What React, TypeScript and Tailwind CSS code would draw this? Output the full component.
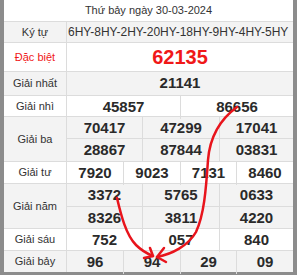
import React from "react";

const font = { fontFamily: '"Liberation Sans", Arial, sans-serif' };

function Label({ children, red }: { children: React.ReactNode; red?: boolean }) {
  return (
    <div
      className={`w-[63px] shrink-0 border-r border-[#dcdcdc] flex items-center justify-center text-[11px] ${
        red ? "text-[#f01818]" : "text-[#333]"
      }`}
    >
      {children}
    </div>
  );
}

function Num({ children, last }: { children: React.ReactNode; last?: boolean }) {
  return (
    <div
      className={`flex items-center justify-center font-bold text-[15px] text-[#2a2a2a] ${
        last ? "" : "border-r border-[#dcdcdc]"
      }`}
    >
      {children}
    </div>
  );
}

export default function App() {
  return (
    <div className="relative w-[300px] h-[275px] bg-white" style={font}>
      <div className="w-[297px] border-x-4 border-b-4 border-[#8c8c8c] bg-white">
        {/* Title */}
        <div className="h-[22px] border-b border-[#dcdcdc] flex items-center justify-center text-[11px] text-[#333]">
          Thứ bảy ngày 30-03-2024
        </div>
        {/* Ký tự */}
        <div className="h-[21px] border-b border-[#dcdcdc] flex bg-[#f3f3f3]">
          <Label>Ký tự</Label>
          <div className="flex-1 flex items-center overflow-hidden whitespace-nowrap pl-[1px] text-[12px] text-[#333]">
            6HY-8HY-2HY-20HY-18HY-9HY-4HY-5HY
          </div>
        </div>
        {/* Đặc biệt */}
        <div className="h-[29px] border-b border-[#dcdcdc] flex">
          <Label red>Đặc biệt</Label>
          <div className="flex-1 flex items-center justify-center font-bold text-[20px] text-[#f01818]">
            62135
          </div>
        </div>
        {/* Giải nhất */}
        <div className="h-[24px] border-b border-[#dcdcdc] flex bg-[#f3f3f3]">
          <Label>Giải nhất</Label>
          <div className="flex-1 flex items-center justify-center font-bold text-[15px] text-[#2a2a2a]">
            21141
          </div>
        </div>
        {/* Giải nhì */}
        <div className="h-[21px] border-b border-[#dcdcdc] flex">
          <Label>Giải nhì</Label>
          <div className="flex-1 grid grid-cols-[114px_1fr]">
            <Num>45857</Num>
            <Num last>86656</Num>
          </div>
        </div>
        {/* Giải ba */}
        <div className="border-b border-[#dcdcdc] flex bg-[#f3f3f3]">
          <Label>Giải ba</Label>
          <div className="flex-1 flex flex-col">
            <div className="h-[22px] border-b border-[#dcdcdc] grid grid-cols-[76px_77px_1fr]">
              <Num>70417</Num>
              <Num>47299</Num>
              <Num last>17041</Num>
            </div>
            <div className="h-[22px] grid grid-cols-[76px_77px_1fr]">
              <Num>28867</Num>
              <Num>87844</Num>
              <Num last>03831</Num>
            </div>
          </div>
        </div>
        {/* Giải tư */}
        <div className="h-[22px] border-b border-[#dcdcdc] flex">
          <Label>Giải tư</Label>
          <div className="flex-1 grid grid-cols-[57px_57px_56px_1fr]">
            <Num>7920</Num>
            <Num>9023</Num>
            <Num>7131</Num>
            <Num last>8460</Num>
          </div>
        </div>
        {/* Giải năm */}
        <div className="border-b border-[#dcdcdc] flex bg-[#f3f3f3]">
          <Label>Giải năm</Label>
          <div className="flex-1 flex flex-col">
            <div className="h-[23px] border-b border-[#dcdcdc] grid grid-cols-[76px_77px_1fr]">
              <Num>3372</Num>
              <Num>5765</Num>
              <Num last>0633</Num>
            </div>
            <div className="h-[21px] grid grid-cols-[76px_77px_1fr]">
              <Num>8326</Num>
              <Num>3811</Num>
              <Num last>4220</Num>
            </div>
          </div>
        </div>
        {/* Giải sáu */}
        <div className="h-[22px] border-b border-[#dcdcdc] flex">
          <Label>Giải sáu</Label>
          <div className="flex-1 grid grid-cols-[76px_77px_1fr]">
            <Num>752</Num>
            <Num>057</Num>
            <Num last>840</Num>
          </div>
        </div>
        {/* Giải bảy */}
        <div className="h-[21px] flex bg-[#f3f3f3]">
          <Label>Giải bảy</Label>
          <div className="flex-1 grid grid-cols-[57px_57px_56px_1fr]">
            <Num>96</Num>
            <Num>94</Num>
            <Num>29</Num>
            <Num last>09</Num>
          </div>
        </div>
      </div>

      {/* Red annotation arrows */}
      <svg
        className="absolute left-0 top-0 pointer-events-none"
        width="300"
        height="275"
        viewBox="0 0 300 275"
        fill="none"
      >
        <g stroke="#e8141c" strokeWidth="2.5" strokeLinecap="round" strokeLinejoin="round">
          <path d="M237 107 C 222 118, 210 135, 208 160 C 206 190, 204 215, 196 232 C 188 246, 172 254, 157 257" />
          <path d="M157 257 L 164 248 M157 257 L 166 262" />
          <path d="M117 198 C 121 215, 126 235, 136 245 C 142 251, 148 254, 153 256" />
          <path d="M153 256 L 150 248 M153 256 L 144 258" />
        </g>
      </svg>
    </div>
  );
}
